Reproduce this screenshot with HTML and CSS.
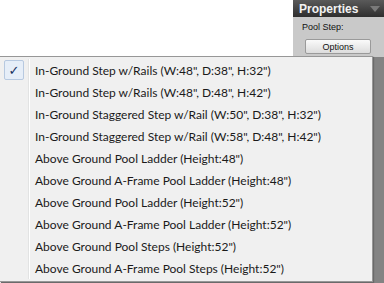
FILE: index.html
```html
<!DOCTYPE html>
<html>
<head>
  <meta charset="UTF-8">
  <title>Pool Step</title>
  <link rel="stylesheet" href="styles.css">
</head>
<body>
  <div class="screen">
    <div class="canvas"></div>

    <div class="panel">
      <div class="panel-head">
        <span>Properties</span>
        <span class="arrow"></span>
      </div>
      <div class="panel-body">
        <div class="label">Pool Step:</div>
        <button class="options">Options</button>
      </div>
      <div class="panel-rest"></div>
    </div>

    <!-- dropdown menu -->
    <ul class="menu">
      <li class="checked"><span class="gutter"><span class="check">&#10003;</span></span>In-Ground Step w/Rails (W:48", D:38", H:32")</li>
      <li><span class="gutter"></span>In-Ground Step w/Rails (W:48", D:48", H:42")</li>
      <li><span class="gutter"></span>In-Ground Staggered Step w/Rail (W:50", D:38", H:32")</li>
      <li><span class="gutter"></span>In-Ground Staggered Step w/Rail (W:58", D:48", H:42")</li>
      <li><span class="gutter"></span>Above Ground Pool Ladder (Height:48")</li>
      <li><span class="gutter"></span>Above Ground A-Frame Pool Ladder (Height:48")</li>
      <li><span class="gutter"></span>Above Ground Pool Ladder (Height:52")</li>
      <li><span class="gutter"></span>Above Ground A-Frame Pool Ladder (Height:52")</li>
      <li><span class="gutter"></span>Above Ground Pool Steps (Height:52")</li>
      <li><span class="gutter"></span>Above Ground A-Frame Pool Steps (Height:52")</li>
    </ul>
  </div>
</body>
</html>
```

FILE: styles.css
```css
* {
  box-sizing: border-box;
}

body {
  margin: 0;
  font-family: Lato, "Noto Sans", sans-serif;
  background: #ffffff;
}

.screen {
  position: relative;
  display: flex;
  width: 384px;
  height: 283px;
  overflow: hidden;
}

.canvas {
  flex: 1;
  background: #ffffff;
}

.panel {
  width: 91px;
  display: flex;
  flex-direction: column;
}

.panel-head {
  height: 17px;
  display: flex;
  align-items: center;
  justify-content: space-between;
  padding: 0 4px 0 6px;
  background: linear-gradient(to bottom, #5a5a5a, #2e2e2e);
  color: #f2f2f2;
  font-family: "Liberation Sans", Arial, sans-serif;
  font-weight: bold;
  font-size: 12px;
}

.arrow {
  width: 0;
  height: 0;
  border-left: 5px solid transparent;
  border-right: 5px solid transparent;
  border-top: 6px solid #7a7a7a;
}

.panel-body {
  height: 40px;
  background: #c9c9c9;
  padding: 5px 0 0 9px;
}

.label {
  font-family: "Liberation Sans", Arial, sans-serif;
  font-size: 9px;
  color: #111;
  margin-bottom: 7px;
}

.options {
  display: block;
  width: 66px;
  height: 15px;
  margin-left: 3px;
  padding: 0;
  border: 1px solid #9a9a9a;
  border-radius: 2px;
  background: linear-gradient(to bottom, #fafafa, #dcdcdc);
  font-family: "Liberation Sans", Arial, sans-serif;
  font-size: 9px;
  color: #111;
}

.panel-rest {
  flex: 1;
  background: #838383;
}

.menu {
  position: absolute;
  left: 0;
  top: 56px;
  width: 373px;
  margin: 0;
  padding: 2px 2px;
  list-style: none;
  background: #f0f0f0;
  border: 1px solid #979797;
  border-left: none;
  box-shadow: 1px 1px 1px #6a6a6a;
}

.menu li {
  display: flex;
  align-items: center;
  height: 22px;
  font-size: 12px;
  color: #1a1a1a;
  white-space: nowrap;
}

.gutter {
  width: 27px;
  height: 100%;
  flex: none;
  display: flex;
  align-items: center;
  padding-left: 2px;
  margin-right: 6px;
  border-right: 1px solid #e2e3e3;
  position: relative;
}

.gutter::after {
  content: "";
  position: absolute;
  right: -2px;
  top: 0;
  bottom: 0;
  border-right: 1px solid #ffffff;
}

.check {
  width: 20px;
  height: 20px;
  display: flex;
  align-items: center;
  justify-content: center;
  background: #e6eef8;
  border: 1px solid #b7c9e0;
  border-radius: 2px;
  color: #16325e;
  font-family: "DejaVu Sans", sans-serif;
  font-weight: bold;
  font-size: 13px;
}
```
